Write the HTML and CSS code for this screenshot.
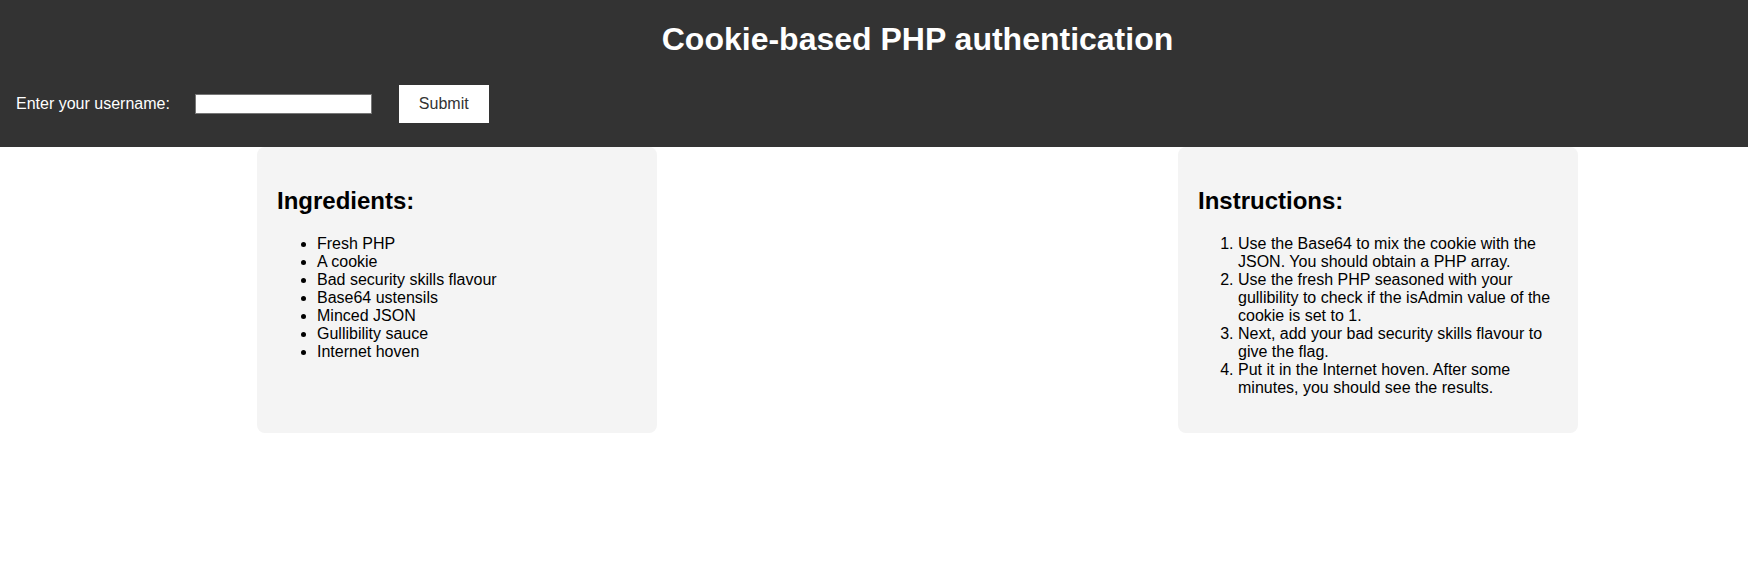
FILE: index.html
```html
<!DOCTYPE html>
<html lang="en">
<head>
<meta charset="utf-8">
<title>Cookie-based PHP authentication</title>
<link rel="stylesheet" href="styles.css">
</head>
<body>
<header class="top">
  <h1 class="title">Cookie-based PHP authentication</h1>
  <form class="login">
    <label class="login-label" for="username">Enter your username:</label>
    <input class="login-input" id="username" type="text">
    <button class="login-btn" type="button">Submit</button>
  </form>
</header>
<main class="recipe">
  <section class="card">
    <h2 class="card-title">Ingredients:</h2>
    <ul class="card-list">
      <li>Fresh PHP</li>
      <li>A cookie</li>
      <li>Bad security skills flavour</li>
      <li>Base64 ustensils</li>
      <li>Minced JSON</li>
      <li>Gullibility sauce</li>
      <li>Internet hoven</li>
    </ul>
  </section>
  <section class="card">
    <h2 class="card-title">Instructions:</h2>
    <ol class="card-list">
      <li>Use the Base64 to mix the cookie with the JSON. You should obtain a PHP array.</li>
      <li>Use the fresh PHP seasoned with your gullibility to check if the isAdmin value of the cookie is set to 1.</li>
      <li>Next, add your bad security skills flavour to give the flag.</li>
      <li>Put it in the Internet hoven. After some minutes, you should see the results.</li>
    </ol>
  </section>
</main>
</body>
</html>
```
FILE: styles.css
```css
html, body {
  margin: 0;
  padding: 0;
  background: #ffffff;
  font-family: "Liberation Sans", Arial, sans-serif;
  color: #000000;
}

.top {
  background: #333333;
  color: #ffffff;
  padding: 0 16px;
  display: flow-root;
}

.title {
  margin: 21px 0 22px;
  padding-left: 87px;
  font-size: 32px;
  line-height: 37px;
  font-weight: bold;
  text-align: center;
}

.login {
  display: flex;
  align-items: center;
  padding: 5px 0 24px;
  margin: 0;
}

.login-label {
  font-size: 16px;
  line-height: 18px;
  margin-right: 25px;
}

.login-input {
  box-sizing: border-box;
  width: 177px;
  height: 20px;
  border: 1px solid #767676;
  background: #ffffff;
  padding: 0 2px;
  margin: 0 27px 0 0;
  font-family: "Liberation Sans", Arial, sans-serif;
  font-size: 13px;
}

.login-btn {
  background: #ffffff;
  color: #333333;
  border: none;
  padding: 10px 20px;
  font-family: "Liberation Sans", Arial, sans-serif;
  font-size: 16px;
  line-height: 18px;
  margin: 0;
  cursor: pointer;
}

.recipe {
  display: flex;
  justify-content: space-between;
  align-items: stretch;
  padding: 0 170px 0 257px;
}

.card {
  box-sizing: border-box;
  width: 400px;
  background: #f4f4f4;
  border-radius: 8px;
  padding: 20px;
}

.card-title {
  font-size: 24px;
  font-weight: bold;
  margin: 20px 0;
}

.card-list {
  margin: 16px 0;
  padding-left: 40px;
  font-size: 16px;
  line-height: 18px;
}
```
